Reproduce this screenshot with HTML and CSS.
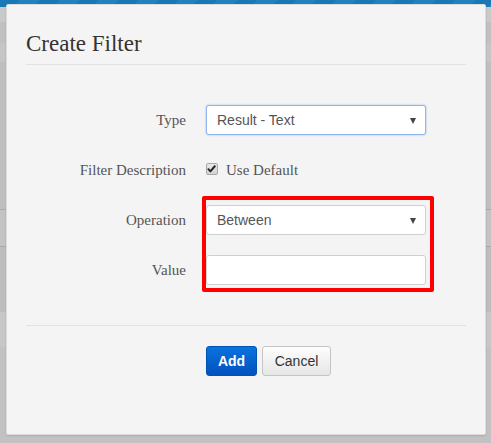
FILE: index.html
```html
<!DOCTYPE html>
<html>
<head>
<meta charset="utf-8">
<link rel="stylesheet" href="styles.css">
</head>
<body>
<div class="page">
  <div class="band topbar"></div>
  <div class="band b1"></div>
  <div class="band b2"></div>
  <div class="band b3"></div>
  <div class="band b4"></div>
  <div class="band line"></div>
  <div class="band b5"></div>
  <div class="band line"></div>
  <div class="band b6"></div>
  <div class="band b7"></div>
  <div class="band b8"></div>
</div>

<div class="modal">
  <div class="modal-header">
    <h1 class="modal-title">Create Filter</h1>
  </div>
  <form class="modal-body">
    <label class="form-label" for="type">Type</label>
    <div class="select-wrap">
      <select id="type" class="form-select focused">
        <option>Result - Text</option>
      </select>
    </div>

    <span class="form-label">Filter Description</span>
    <label class="check-row">
      <span class="checkbox">
        <svg viewBox="0 0 12 12" width="12" height="12"><path d="M2.6 6.2 L4.8 8.6 L9.6 3" fill="none" stroke="#222" stroke-width="2.1" stroke-linecap="round" stroke-linejoin="round"/></svg>
      </span>
      <span class="check-text">Use Default</span>
    </label>

    <label class="form-label" for="op">Operation</label>
    <div class="select-wrap">
      <select id="op" class="form-select">
        <option>Between</option>
      </select>
    </div>

    <label class="form-label" for="val">Value</label>
    <input id="val" class="form-input" type="text">
  </form>
  <div class="modal-footer">
    <button class="btn btn-primary" type="button">Add</button>
    <button class="btn btn-default" type="button">Cancel</button>
  </div>
  <div class="highlight"></div>
</div>
</body>
</html>
```

FILE: styles.css
```css
* { box-sizing: border-box; }
html, body { margin: 0; padding: 0; }
body {
  width: 491px;
  height: 443px;
  overflow: hidden;
  background: #c2c2c2;
  position: relative;
}

.page { display: flex; flex-direction: column; }
.band { width: 100%; }
.topbar {
  height: 7px;
  background: repeating-linear-gradient(135deg, #1b78b6 0 14px, #2282c0 14px 28px);
}
.b1 { height: 15px; background: #c9c9c9; }
.b2 { height: 21px; background: #c0c0c0; }
.b3 { height: 19px; background: #c5c5c5; }
.b4 { height: 147px; background: #bfbfbf; }
.line { height: 1px; background: #a9a9a9; }
.b5 { height: 36px; background: #c3c3c3; }
.b6 { height: 65px; background: #bdbdbd; }
.b7 { height: 35px; background: #c7c7c7; }
.b8 { height: 96px; background: #c2c2c2; }

.modal {
  position: absolute;
  left: 6px;
  top: 4px;
  width: 480px;
  height: 431px;
  background: #f4f4f4;
  border: 1px solid #dcdcdc;
  border-radius: 2px;
  box-shadow: 0 1px 2px rgba(0,0,0,0.12);
  padding: 0 19px;
}

.modal-header {
  padding-top: 27px;
  padding-bottom: 8px;
  border-bottom: 1px solid #e2e2e2;
}
.modal-title {
  margin: 0;
  font-family: "Liberation Serif", serif;
  font-weight: normal;
  font-size: 23px;
  line-height: 24px;
  color: #333;
}

.modal-body {
  margin: 40px 0 0;
  display: grid;
  grid-template-columns: 160px 220px;
  column-gap: 20px;
  row-gap: 20px;
  grid-auto-rows: 30px;
  padding-bottom: 40px;
  border-bottom: 1px solid #e2e2e2;
}

.form-label {
  display: flex;
  align-items: center;
  justify-content: flex-end;
  font-family: "Liberation Serif", serif;
  font-size: 15px;
  color: #555;
  padding-top: 1px;
}

.select-wrap { position: relative; }
.select-wrap::after {
  content: "";
  position: absolute;
  right: 10px;
  top: 13px;
  border-left: 3.5px solid transparent;
  border-right: 3.5px solid transparent;
  border-top: 6px solid #444;
  pointer-events: none;
}
.form-select, .form-input {
  width: 220px;
  height: 30px;
  margin: 0;
  background: #fff;
  border: 1px solid #cfcfcf;
  border-radius: 3px;
  font-family: "Liberation Sans", Arial, sans-serif;
  font-size: 14px;
  color: #555;
  padding: 0 24px 0 10px;
  outline: none;
}
.form-select { appearance: none; -webkit-appearance: none; }
.form-select.focused {
  border-color: #8fb6ec;
  box-shadow: 0 0 2px rgba(102,150,233,0.7);
}

.check-row {
  display: flex;
  align-items: center;
  gap: 8px;
  padding-top: 1px;
}
.checkbox {
  width: 12px;
  height: 12px;
  margin-top: -4px;
  border: 1px solid #a8a8a8;
  border-radius: 2px;
  background: linear-gradient(#e8e8e8, #d4d4d4);
  display: flex;
}
.checkbox svg { display: block; margin: -1px 0 0 -1px; }
.check-text {
  font-family: "Liberation Serif", serif;
  font-size: 15px;
  color: #555;
}

.modal-footer {
  padding: 20px 0 0 180px;
  display: flex;
  gap: 5px;
}
.btn {
  height: 30px;
  border-radius: 3px;
  font-family: "Liberation Sans", Arial, sans-serif;
  font-size: 14px;
  padding: 0;
  cursor: pointer;
}
.btn-primary {
  width: 51px;
  color: #fff;
  font-weight: bold;
  background: linear-gradient(#0b72dd, #0152c0);
  border: 1px solid #0451b5;
}
.btn-default {
  width: 69px;
  color: #333;
  background: linear-gradient(#fdfdfd, #e6e6e6);
  border: 1px solid #c4c4c4;
}

.highlight {
  position: absolute;
  left: 195px;
  top: 191px;
  width: 232px;
  height: 96px;
  border: 4px solid #ff0000;
  border-radius: 2px;
  pointer-events: none;
}
```
